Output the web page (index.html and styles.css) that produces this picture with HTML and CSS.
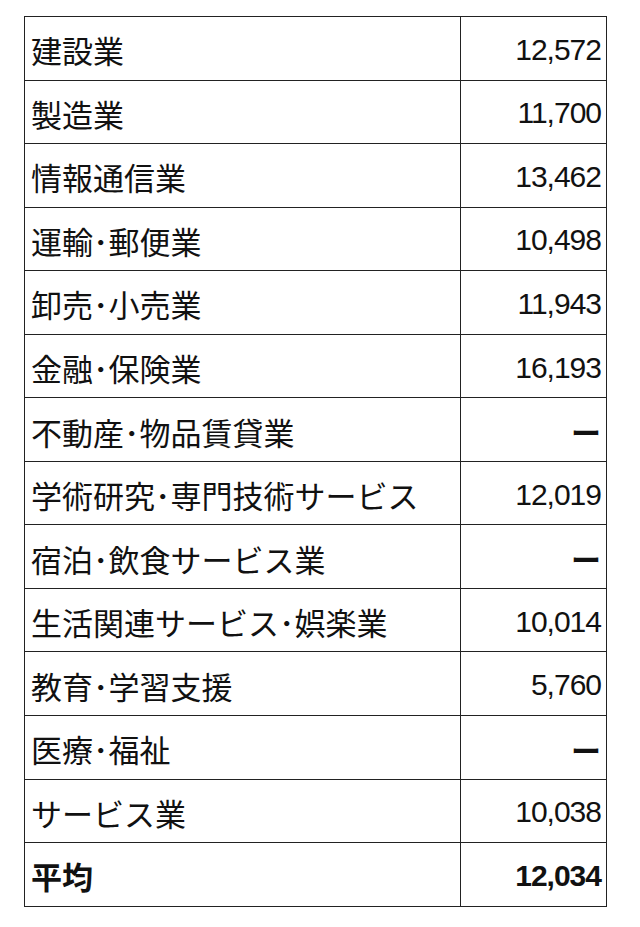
FILE: index.html
```html
<!DOCTYPE html>
<html lang="ja">
<head>
<meta charset="utf-8">
<link rel="stylesheet" href="styles.css">
</head>
<body>
<table class="tbl">
<colgroup><col class="c1"><col class="c2"></colgroup>
<tr><td class="name">建設業</td><td class="num">12,572</td></tr>
<tr><td class="name">製造業</td><td class="num">11,700</td></tr>
<tr><td class="name">情報通信業</td><td class="num">13,462</td></tr>
<tr><td class="name">運輸･郵便業</td><td class="num">10,498</td></tr>
<tr><td class="name">卸売･小売業</td><td class="num">11,943</td></tr>
<tr><td class="name">金融･保険業</td><td class="num">16,193</td></tr>
<tr><td class="name">不動産･物品賃貸業</td><td class="num dash">ー</td></tr>
<tr><td class="name">学術研究･専門技術サービス</td><td class="num">12,019</td></tr>
<tr><td class="name">宿泊･飲食サービス業</td><td class="num dash">ー</td></tr>
<tr><td class="name">生活関連サービス･娯楽業</td><td class="num">10,014</td></tr>
<tr><td class="name">教育･学習支援</td><td class="num">5,760</td></tr>
<tr><td class="name">医療･福祉</td><td class="num dash">ー</td></tr>
<tr><td class="name">サービス業</td><td class="num">10,038</td></tr>
<tr class="avg"><td class="name">平均</td><td class="num">12,034</td></tr>
</table>
</body>
</html>
```
FILE: styles.css
```css
html, body {
  margin: 0;
  padding: 0;
  background: #fff;
}
body {
  padding: 16px 0 0 24px;
}
.tbl {
  border-collapse: collapse;
  width: 582px;
  table-layout: fixed;
  font-family: "Noto Sans CJK JP", sans-serif;
  color: #111;
}
.tbl .c1 { width: 436px; }
.tbl .c2 { width: 146px; }
.tbl td {
  border: 1px solid #222;
  height: 59.55px;
  padding: 3px 0 0 0;
  font-size: 31px;
  line-height: 1;
  vertical-align: middle;
  white-space: nowrap;
}
.tbl .name {
  padding-left: 6px;
}
.tbl .num {
  text-align: right;
  padding-right: 5px;
  font-family: "Liberation Sans", sans-serif;
  font-size: 30px;
  letter-spacing: -1px;
}
.tbl .num.dash {
  font-family: "Noto Sans CJK JP", sans-serif;
  font-size: 30px;
  font-weight: bold;
  padding-right: 6px;
}
.tbl .avg td {
  font-weight: bold;
}
```
